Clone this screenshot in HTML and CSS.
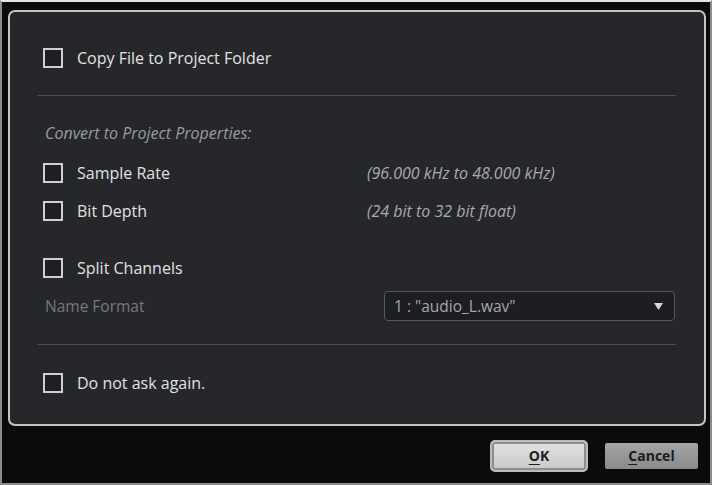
FILE: index.html
```html
<!DOCTYPE html>
<html lang="en">
<head>
    <meta charset="UTF-8">
    <title>Import Options</title>
    <link rel="stylesheet" href="styles.css">
</head>
<body>
<div class="window">
    <div class="panel">
        <div class="row row-copy">
            <span class="check"></span>
            <span class="label">Copy File to Project Folder</span>
        </div>
        <div class="sep sep-top"></div>
        <div class="caption">Convert to Project Properties:</div>
        <div class="row row-rate">
            <span class="check"></span>
            <span class="label">Sample Rate</span>
            <span class="info">(96.000 kHz to 48.000 kHz)</span>
        </div>
        <div class="row row-depth">
            <span class="check"></span>
            <span class="label">Bit Depth</span>
            <span class="info">(24 bit to 32 bit float)</span>
        </div>
        <div class="row row-split">
            <span class="check"></span>
            <span class="label">Split Channels</span>
        </div>
        <div class="name-row">
            <span class="name-label">Name Format</span>
            <div class="select">
                <span>1 : "audio_L.wav"</span>
                <svg class="arrow" width="9" height="7" viewBox="0 0 9 7">
                    <path d="M0 0h9L4.5 7z" fill="#d8d8d8"></path>
                </svg>
            </div>
        </div>
        <div class="sep sep-bottom"></div>
        <div class="row row-ask">
            <span class="check"></span>
            <span class="label">Do not ask again.</span>
        </div>
    </div>
    <div class="footer">
        <button class="btn btn-ok"><u>O</u>K</button>
        <button class="btn btn-cancel"><u>C</u>ancel</button>
    </div>
</div>
</body>
</html>
```

FILE: styles.css
```css
html, body {
    margin: 0;
    padding: 0;
}

body {
    width: 712px;
    height: 485px;
    background-color: #0b0b0b;
    font-family: "Open Sans", "Noto Sans", sans-serif;
}

.window {
    box-sizing: border-box;
    width: 712px;
    height: 485px;
    border: 2px solid #8c8c8c;
    border-top-color: #e6e6e6;
    background-color: #0b0b0b;
}

.panel {
    box-sizing: border-box;
    height: 416px;
    margin: 8px 4px 0 6px;
    padding: 35px 28px 0 33px;
    border: 2px solid #c4c4c4;
    border-radius: 7px;
    background-color: #25272b;
}

.row {
    display: grid;
    grid-template-columns: 34px 290px 1fr;
    align-items: center;
    height: 20px;
}

.check {
    box-sizing: border-box;
    width: 20px;
    height: 20px;
    border: 2px solid #cfcfcf;
    background-color: #1d1f22;
}

.label {
    font-size: 16px;
    color: #e2e2e2;
}

.info {
    font-size: 16px;
    font-style: italic;
    color: #a9abae;
}

.sep {
    height: 1px;
    margin-left: -6px;
    background-color: #4a4d51;
}

.sep-top {
    margin-top: 28px;
}

.caption {
    height: 20px;
    margin-top: 27px;
    margin-left: 2px;
    font-size: 16px;
    font-style: italic;
    line-height: 20px;
    color: #9a9ca0;
}

.row-rate {
    margin-top: 19px;
}

.row-depth {
    margin-top: 18px;
}

.row-split {
    margin-top: 37px;
}

.name-row {
    display: flex;
    align-items: center;
    justify-content: space-between;
    height: 30px;
    margin-top: 14px;
    padding-left: 2px;
}

.name-label {
    font-size: 15.5px;
    color: #76787c;
}

.select {
    box-sizing: border-box;
    display: flex;
    align-items: center;
    justify-content: space-between;
    width: 291px;
    height: 30px;
    margin-right: 1px;
    padding: 0 11px 0 9px;
    border: 1px solid #55585c;
    border-radius: 4px;
    background-color: #1c1e21;
    font-size: 15.5px;
    color: #a6a8ab;
}

.sep-bottom {
    margin-top: 23px;
}

.row-ask {
    margin-top: 27px;
}

.footer {
    display: flex;
    align-items: center;
    justify-content: flex-end;
    gap: 17px;
    height: 59px;
    padding-right: 12px;
}

.btn {
    box-sizing: border-box;
    font-family: "Open Sans", "Noto Sans", sans-serif;
    font-size: 14px;
    font-weight: 700;
    color: #1c1c1c;
    cursor: pointer;
}

.btn u {
    text-underline-offset: 3px;
}

.btn-ok {
    width: 98px;
    height: 32px;
    border: 2px solid #bdbdbd;
    border-radius: 5px;
    background: linear-gradient(#e2e2e2, #c9c9c9);
    box-shadow: inset 0 0 0 2px #8e8e8e;
}

.btn-cancel {
    width: 93px;
    height: 26px;
    border: none;
    border-radius: 2px;
    background: linear-gradient(#a2a3a4, #8a8b8c);
}
```
